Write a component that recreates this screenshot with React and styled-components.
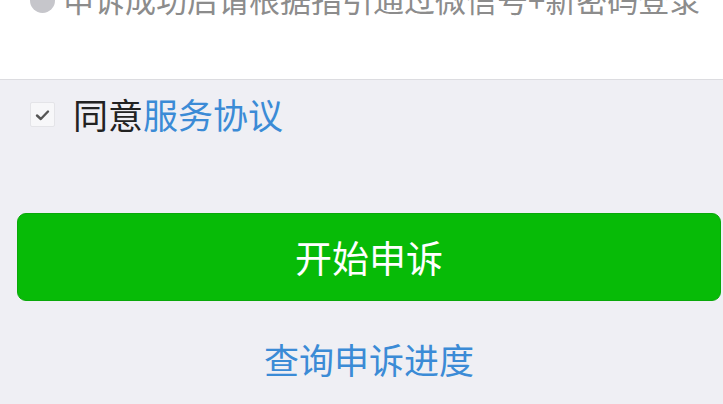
import styled, { createGlobalStyle } from "styled-components"

const GlobalStyle = createGlobalStyle`
  html, body {
    margin: 0;
    padding: 0;
    background: #efeff4;
  }
  body {
    font-family: "Noto Sans CJK SC", "Noto Sans", sans-serif;
    overflow: hidden;
  }
`

const Page = styled.div`
  width: 723px;
  height: 404px;
  overflow: hidden;
  background: #efeff4;
  display: flex;
  flex-direction: column;
`

const TopPanel = styled.div`
  height: 79px;
  background: #fff;
  border-bottom: 1px solid #dcdce0;
  overflow: hidden;
`

const Notice = styled.div`
  display: flex;
  align-items: center;
  gap: 8px;
  height: 32px;
  margin-top: -17px;
  padding-left: 30px;
  color: #8c8c8c;
  font-size: 31px;
  line-height: 32px;
  white-space: nowrap;
`

const Dot = styled.span`
  width: 25px;
  height: 25px;
  border-radius: 50%;
  background: #c6c6cb;
  flex: none;
  margin-top: 2px;
`

const AgreeRow = styled.label`
  display: flex;
  align-items: center;
  gap: 18px;
  height: 66px;
  padding-left: 30px;
  font-size: 35px;
  color: #222;
`

const Box = styled.span`
  width: 23px;
  height: 23px;
  flex: none;
  margin-top: 3px;
  background: #f7f7f9;
  border: 1px solid #e4e4e8;
  border-radius: 2px;
  display: flex;
  align-items: center;
  justify-content: center;
`

const Link = styled.span`
  color: ${(p) => p.$color || "#3b8bd6"};
`

const Button = styled.button`
  margin: 67px 2px 0 17px;
  height: 88px;
  border: 1px solid #0aa80a;
  border-radius: 9px;
  background: #07bb07;
  color: #fff;
  font-family: inherit;
  font-size: 37px;
  line-height: 1;
  display: flex;
  align-items: center;
  justify-content: center;
  padding: 0;
`

const QueryLink = styled.div`
  margin-top: 34px;
  text-align: center;
  padding-left: 15px;
  font-size: 35px;
  line-height: 48px;
  color: #3b8bd6;
`

export default function App() {
  return (
    <>
      <GlobalStyle />
      <Page>
        <TopPanel>
          <Notice>
            <Dot />
            <span>申诉成功后请根据指引通过微信号+新密码登录</span>
          </Notice>
        </TopPanel>
        <AgreeRow>
          <Box>
            <svg width="15" height="12" viewBox="0 0 15 12">
              <path d="M2 6.5 L5.8 10 L13 2.5" fill="none" stroke="#555" strokeWidth="2.4" strokeLinecap="round" strokeLinejoin="round" />
            </svg>
          </Box>
          <span>
            同意<Link>服务协议</Link>
          </span>
        </AgreeRow>
        <Button>开始申诉</Button>
        <QueryLink>查询申诉进度</QueryLink>
      </Page>
    </>
  )
}
